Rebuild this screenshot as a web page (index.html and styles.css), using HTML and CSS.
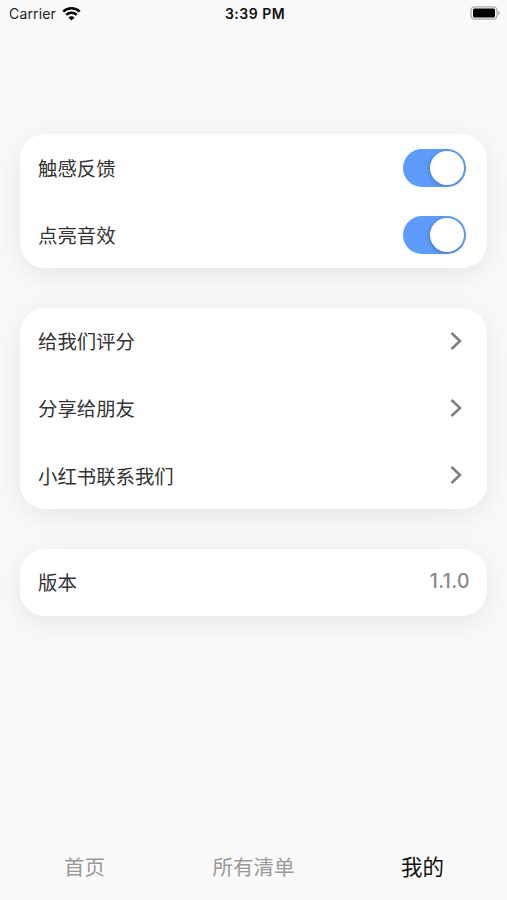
FILE: index.html
```
<!DOCTYPE html>
<html lang="zh-CN">
<head>
  <meta charset="UTF-8" />
  <title>我的</title>
  <link rel="stylesheet" href="styles.css">
</head>
<body>
  <header class="status-bar">
    <div class="carrier">
      <span>Carrier</span>
      <svg class="wifi" viewBox="0 0 18 14" width="19" height="15">
        <path d="M1.2 5.2a11.2 11.2 0 0 1 15.6 0M4 8.3a7.2 7.2 0 0 1 10 0" />
        <path class="dot" d="M9 13.6 6.1 10.7a4.1 4.1 0 0 1 5.8 0z" />
      </svg>
    </div>
    <div class="time">3:39 PM</div>
    <svg class="battery" viewBox="0 0 31 14" width="31" height="14">
      <rect class="shell" x="1" y="0.8" width="26" height="12.4" rx="3.6" />
      <rect x="3" y="2.6" width="22" height="8.8" rx="1.5" />
      <path class="tip" d="M28.3 4.8c2 .7 2 3.7 0 4.4z" />
    </svg>
  </header>

  <main>
    <section class="card">
      <label class="row">
        <span>触感反馈</span>
        <input class="switch" type="checkbox" checked />
      </label>
      <label class="row">
        <span>点亮音效</span>
        <input class="switch" type="checkbox" checked />
      </label>
    </section>

    <section class="card">
      <div class="row">
        <span>给我们评分</span>
        <svg class="arrow" viewBox="0 0 12 20" width="12" height="20"><path d="M1.5 2 10 10l-8.500 8" /></svg>
      </div>
      <div class="row">
        <span>分享给朋友</span>
        <svg class="arrow" viewBox="0 0 12 20" width="12" height="20"><path d="M1.5 2 10 10l-8.500 8" /></svg>
      </div>
      <div class="row">
        <span>小红书联系我们</span>
        <svg class="arrow" viewBox="0 0 12 20" width="12" height="20"><path d="M1.5 2 10 10l-8.500 8" /></svg>
      </div>
    </section>

    <section class="card">
      <div class="row">
        <span>版本</span>
        <span class="version">1.1.0</span>
      </div>
    </section>
  </main>

  <nav class="tabs">
    <div class="tab">首页</div>
    <div class="tab">所有清单</div>
    <div class="tab active">我的</div>
  </nav>
</body>
</html>
```
FILE: styles.css
```
* {
  box-sizing: border-box;
}
body {
  margin: 0;
  height: 900px;
  display: flex;
  flex-direction: column;
  overflow: hidden;
  background: #fafafa;
  color: #333;
  font-family: Inter, "Noto Sans CJK SC", sans-serif;
}
.status-bar {
  display: grid;
  grid-template-columns: 1fr auto 1fr;
  align-items: center;
  height: 26px;
  padding: 0 6px 0 9px;
  color: #222;
  font-size: 14px;
}
.carrier {
  display: flex;
  align-items: center;
  gap: 6px;
  letter-spacing: 0.15px;
}
.wifi {
  fill: none;
  stroke: #000;
  stroke-width: 2.4;
}
.wifi .dot {
  fill: #000;
  stroke: none;
}
.time {
  color: #111;
  font-weight: 600;
  letter-spacing: 0.5px;
}
.battery {
  justify-self: end;
}
.battery .shell {
  fill: #fafafa;
  stroke: #aaa;
  stroke-width: 1.3;
}
.battery .tip {
  fill: #aaa;
}
main {
  flex: 1;
  display: flex;
  flex-direction: column;
  gap: 39.300px;
  padding: 108px 20px 0;
}
.card {
  border-radius: 25px;
  background: #fff;
  box-shadow: 0 6px 30px rgba(0, 0, 0, 0.09);
}
.row {
  display: flex;
  align-items: center;
  justify-content: space-between;
  height: 67.200px;
  padding: 0 18px;
  font-size: 19.400px;
}
.row span {
  padding-bottom: 1px;
}
.switch {
  appearance: none;
  display: flex;
  justify-content: flex-end;
  width: 63px;
  height: 38px;
  margin: 0 3.500px 0 0;
  padding: 2px;
  border-radius: 19px;
  background: #5e9cfb;
}
.switch::before {
  content: "";
  width: 34px;
  height: 34px;
  border-radius: 50%;
  background: #fff;
  box-shadow: -1px 1px 4px rgba(0, 0, 0, 0.22);
}
.arrow {
  margin: 0 7.500px 1px 0;
  fill: none;
  stroke: #808080;
  stroke-width: 2.6;
}
.row .version {
  padding-bottom: 2px;
  color: #888;
  font-weight: 500;
  letter-spacing: 0.4px;
  margin-right: -1px;
}
.tabs {
  display: grid;
  grid-template-columns: repeat(3, 1fr);
  align-items: center;
  height: 66px;
  padding-bottom: 2px;
  text-align: center;
}
.tab {
  color: #999;
  font-size: 20.500px;
}
.tab.active {
  padding-bottom: 2px;
  color: #111;
  font-size: 21.500px;
}
```
